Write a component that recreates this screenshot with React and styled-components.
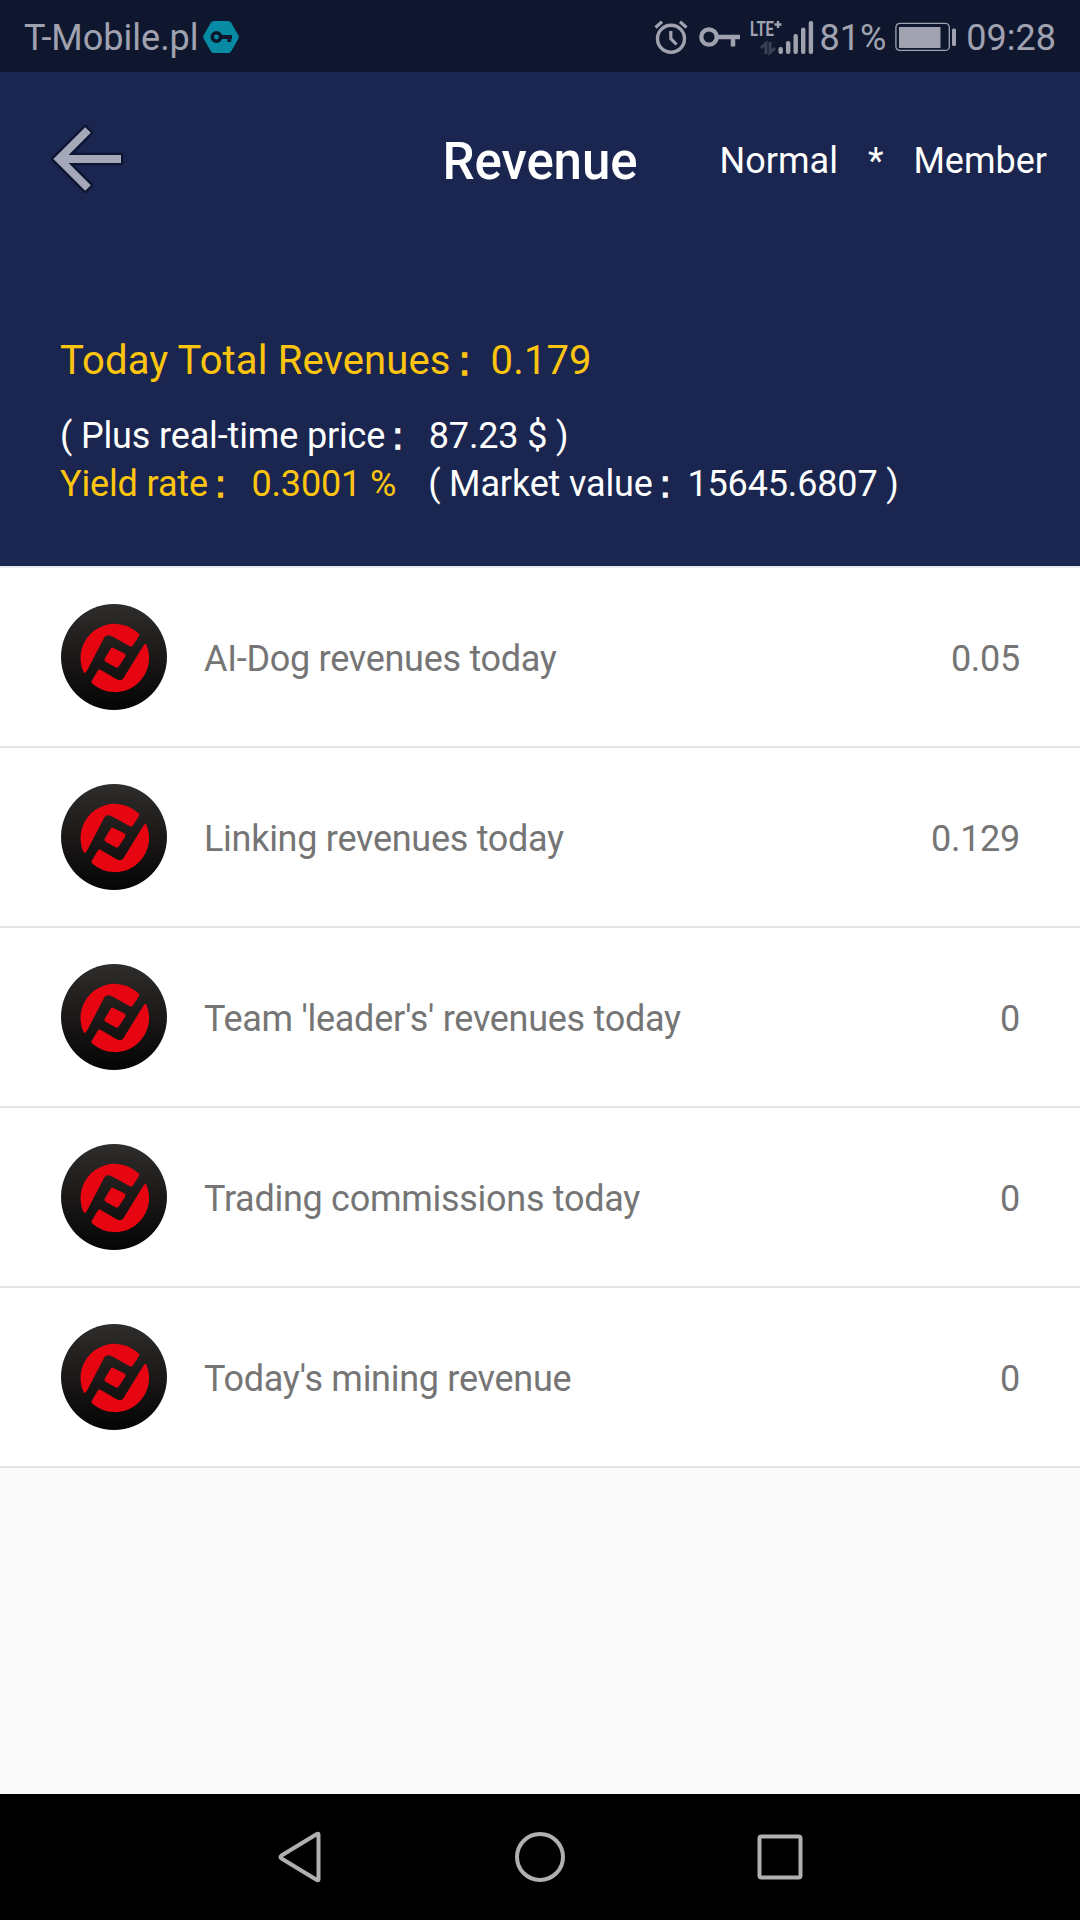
import React from "react";
import styled, { createGlobalStyle } from "styled-components";

const GlobalStyle = createGlobalStyle`
  * {
    box-sizing: border-box;
  }
  body {
    margin: 0;
    background: #fafafa;
    font-family: Roboto, sans-serif;
  }
  svg {
    display: block;
    flex-shrink: 0;
  }
`;

const Screen = styled.div`
  display: flex;
  flex-direction: column;
  width: 1080px;
  height: 1920px;
  background: #fafafa;
`;

// Status bar
const StatusBar = styled.div`
  display: flex;
  justify-content: space-between;
  align-items: center;
  height: 72px;
  padding: 2px 24px 0 24px;
  background: #0f172f;
  color: #a0a2b0;
  font-size: 36px;
`;

const StatusGroup = styled.div`
  display: flex;
  align-items: center;
  gap: ${props => props.gap}px;
`;

const StatusText = styled.span`
  line-height: 42px;
  padding-top: 1px;
  white-space: nowrap;
`;

// Header
const Header = styled.header`
  height: 494px;
  background: #1a264f;
  color: #fff;
`;

const TitleBar = styled.div`
  display: grid;
  grid-template-columns: minmax(0, 1fr) auto minmax(0, 1fr);
  align-items: center;
  height: 176px;
  padding: 0 33px 0 51px;
`;

const BackButton = styled.div`
  padding-bottom: 2px;
`;

const Title = styled.h1`
  margin: 0;
  padding: 3px 18px 0 0;
  font-size: 51px;
  font-weight: 500;
  letter-spacing: -0.1px;
  line-height: 60px;
`;

const Level = styled.div`
  display: flex;
  justify-content: flex-end;
  gap: 30px;
  padding-top: 2px;
  font-size: 36px;
  line-height: 42px;
`;

const Summary = styled.div`
  padding: 89px 60px 0 60px;
`;

const SummaryLine = styled.p`
  display: flex;
  align-items: baseline;
  margin: 0 0 ${props => props.spacing || 0}px 0;
  font-size: ${props => props.size || 36}px;
  letter-spacing: ${props => (props.highlight ? 0.13 : -0.15)}px;
  line-height: 48px;
  white-space: pre;
  color: ${props => (props.highlight ? "#fdc50f" : "#fff")};
`;

const Highlight = styled.span`
  color: #fdc50f;
  margin-right: 32px;
`;

const Colon = styled.span`
  display: inline-block;
  position: relative;
  top: 1px;
  width: ${props => props.width || 0.965}em;
  padding-left: 0.21em;
  font-family: "Liberation Sans", sans-serif;
  line-height: 1;
  -webkit-text-stroke: 1.4px currentColor;
`;

// List
const List = styled.ul`
  margin: 0;
  padding: 0;
  list-style: none;
  background: #fff;
  border-top: 2px solid #e8eaee;
`;

const Row = styled.li`
  display: flex;
  align-items: center;
  height: 180px;
  padding: 0 60px 0 61px;
  border-bottom: 2px solid #e5e5e5;
  color: #757575;
  font-size: 36px;
  letter-spacing: -0.28px;
`;

const RowLabel = styled.span`
  flex: 1;
  margin-left: 37px;
  padding-top: 3px;
`;

const RowValue = styled.span`
  padding-top: 3px;
`;

// Navigation bar
const NavBar = styled.nav`
  display: flex;
  justify-content: center;
  align-items: center;
  gap: 190px;
  height: 126px;
  margin-top: auto;
  background: #000;
`;

const VpnBadge = () => (
  <svg width="36" height="34" viewBox="0 0 36 34">
    <path d="M11 1H25Q27 1 28 2.600L35.500 15.500Q36 17 35.500 18.500L28 31.400Q27 33 25 33H11Q9 33 8 31.400L0.500 18.500Q0 17 0.500 15.500L8 2.600Q9 1 11 1Z" fill="#078ba4" />
    <g fill="none" stroke="#0f172f">
      <circle cx="13.500" cy="17" r="4.200" strokeWidth="3.600" />
      <path d="M17.500 17H29M26.300 17V22" strokeWidth="3.800" />
    </g>
  </svg>
);

const AlarmIcon = () => (
  <svg width="36" height="36" viewBox="0 0 36 36" fill="none" stroke="#a0a2b0">
    <circle cx="17" cy="19.700" r="13.500" strokeWidth="3.400" />
    <path d="M16.800 12V19.500L22.500 25.500" strokeWidth="3.200" />
    <path d="M1.500 8.500L8 2.800M26 2.800L32.500 8.500" strokeWidth="3.200" />
  </svg>
);

const KeyIcon = () => (
  <svg width="42" height="24" viewBox="0 0 42 24" fill="none" stroke="#a0a2b0">
    <circle cx="10" cy="12" r="7.700" strokeWidth="4.300" />
    <path d="M18 12H41M34 12V21.500" strokeWidth="4.500" />
  </svg>
);

const SignalIcon = () => (
  <svg width="64" height="52" viewBox="0 -8 64 52" fill="#a0a2b0">
    <text x="0" y="16.500" fontSize="20" fontWeight="700" textLength="24" lengthAdjust="spacingAndGlyphs">LTE</text>
    <path d="M24.500 5.500H31.500M28 2V9" stroke="#a0a2b0" strokeWidth="2.400" />
    <path d="M11 29L16 24.500V35M20 23V33.500L25 29" fill="none" stroke="#3b4055" strokeWidth="3" />
    <rect x="28.500" y="28" width="4.400" height="7" rx="2" />
    <rect x="36" y="22" width="4.400" height="13" rx="2" />
    <rect x="43.500" y="15" width="4.400" height="20" rx="2" />
    <rect x="51" y="8.500" width="4.400" height="26.500" rx="2" />
    <rect x="58.700" y="2" width="4.400" height="33" rx="2" />
  </svg>
);

const BatteryIcon = () => (
  <svg width="62" height="30" viewBox="0 0 62 30">
    <rect x="0.900" y="1.400" width="53.400" height="27" rx="4" fill="none" stroke="#a0a2b0" strokeWidth="1.300" />
    <rect x="4" y="5" width="41.500" height="21" fill="#a0a2b0" />
    <rect x="57" y="6.500" width="4" height="17.500" rx="1.500" fill="#a0a2b0" />
  </svg>
);

const BackArrow = () => (
  <svg width="74" height="70" viewBox="0 0 74 70" fill="none">
    <path
      d="M34.200 3.200L39.800 8.800L17.600 31H70V39H17.600L39.800 61.200L34.200 66.800L2.400 35Z"
      fill="#a5a8b9"
      stroke="#0d1530"
      strokeWidth="4.600"
      strokeLinejoin="round"
    />
    <path d="M34.200 3.200L39.800 8.800L17.600 31H70V39H17.600L39.800 61.200L34.200 66.800L2.400 35Z" fill="#a5a8b9" />
  </svg>
);

const CoinLogo = () => (
  <svg width="106" height="106" viewBox="4 5 316 316">
    <defs>
      <linearGradient id="coin" x1="0" y1="0" x2="0" y2="1">
        <stop offset="0" stopColor="#2f2d2c" />
        <stop offset="0.5" stopColor="#1b1918" />
        <stop offset="1" stopColor="#050505" />
      </linearGradient>
    </defs>
    <circle cx="162" cy="163" r="158" fill="url(#coin)" />
    <g fill="#e60511">
      <path d="M81 205Q76 214 71 208A102 102 0 0 1 233 91Q240 95 236 101L219 128Q215 134 209 131L153 100Q140 94 133 105Z" />
      <path d="M250 129Q256 119 259 127A102 102 0 0 1 98 243Q92 239 96 233L113 205Q117 198 123 202L171 230Q183 236 190 226Z" />
      <path d="M162 137L192 152Q199 156 195 163L176 191Q172 197 165 193L138 178Q131 174 135 167L151 140Q155 133 162 137Z" />
    </g>
  </svg>
);

const BackKey = () => (
  <svg width="46" height="54" viewBox="0 0 46 54" fill="none" stroke="#b0b0b0" strokeWidth="4" strokeLinejoin="round">
    <path d="M41.500 4.500V49.500Q41.500 51 39.500 49.800L4.500 28.500Q2.500 27 4.500 25.500L39.500 4.200Q41.500 3 41.500 4.500Z" />
  </svg>
);

const HomeKey = () => (
  <svg width="54" height="54" viewBox="0 0 54 54" fill="none" stroke="#b0b0b0" strokeWidth="4">
    <circle cx="27" cy="27" r="23" />
  </svg>
);

const RecentKey = () => (
  <svg width="46" height="46" viewBox="0 0 46 46" fill="none" stroke="#b0b0b0" strokeWidth="4">
    <rect x="2.500" y="2.500" width="41" height="41" rx="2" />
  </svg>
);

const revenues = [
  { label: "AI-Dog revenues today", value: "0.05" },
  { label: "Linking revenues today", value: "0.129" },
  { label: "Team 'leader's' revenues today", value: "0" },
  { label: "Trading commissions today", value: "0" },
  { label: "Today's mining revenue", value: "0" },
];

const App = () => {
  return (
    <Screen>
      <GlobalStyle />
      <StatusBar>
        <StatusGroup gap={4}>
          <StatusText>T-Mobile.pl</StatusText>
          <VpnBadge />
        </StatusGroup>
        <StatusGroup gap={9}>
          <AlarmIcon />
          <KeyIcon />
          <StatusGroup gap={6}>
            <SignalIcon />
            <StatusText>81%</StatusText>
          </StatusGroup>
          <BatteryIcon />
          <StatusText>09:28</StatusText>
        </StatusGroup>
      </StatusBar>

      <Header>
        <TitleBar>
          <BackButton>
            <BackArrow />
          </BackButton>
          <Title>Revenue</Title>
          <Level>
            <span>Normal</span>
            <span>*</span>
            <span>Member</span>
          </Level>
        </TitleBar>
        <Summary>
          <SummaryLine size={40} spacing={27} highlight>
            Today Total Revenues<Colon width={1}>:</Colon>0.179
          </SummaryLine>
          <SummaryLine>
            ( Plus real-time price<Colon>:</Colon>{" 87.23 $ )"}
          </SummaryLine>
          <SummaryLine>
            <Highlight>Yield rate<Colon>:</Colon>{" 0.3001 %"}</Highlight>
            ( Market value<Colon>:</Colon>15645.6807 )
          </SummaryLine>
        </Summary>
      </Header>

      <List>
        {revenues.map(item => (
          <Row key={item.label}>
            <CoinLogo />
            <RowLabel>{item.label}</RowLabel>
            <RowValue>{item.value}</RowValue>
          </Row>
        ))}
      </List>

      <NavBar>
        <BackKey />
        <HomeKey />
        <RecentKey />
      </NavBar>
    </Screen>
  );
};

export default App;
